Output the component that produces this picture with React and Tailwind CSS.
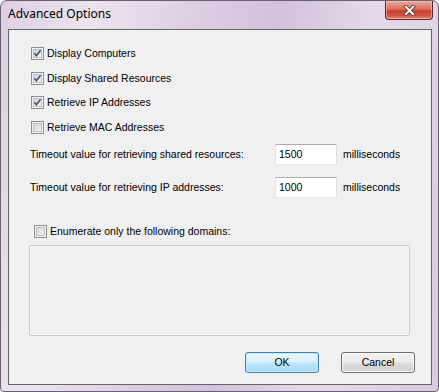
import React from "react";

function Check({ checked }) {
  return (
    <span className="flex h-[13px] w-[13px] shrink-0 border border-[#8e8f8f] bg-[#f4f4f4] p-[1px]">
      <span className="relative flex-1 border border-[#bfbfbf] bg-[linear-gradient(135deg,#d3d3d3,#f6f6f6)]">
        {checked && (
          <svg viewBox="0 0 9 9" className="absolute left-[-1px] top-[-1px] h-[9px] w-[9px]">
            <path d="M1.5 4.2 L3.4 6.6 L7.6 1.2" fill="none" stroke="#3e5393" strokeWidth="1.6" />
          </svg>
        )}
      </span>
    </span>
  );
}

function CheckRow({ checked, label, className }) {
  return (
    <div className={"flex h-[13px] items-center " + className}>
      <Check checked={checked} />
      <span className="ml-[3px] whitespace-nowrap leading-[13px]">{label}</span>
    </div>
  );
}

function Timeout({ label, value, className }) {
  return (
    <div className={"flex h-[21px] items-center " + className}>
      <span className="w-[245px] whitespace-nowrap">{label}</span>
      <div className="flex h-[21px] w-[62px] items-center border border-[#abadb3] border-b-[#e3e9ef] border-l-[#e2e3ea] border-r-[#dbdfe6] bg-white pl-[3px] text-black">
        {value}
      </div>
      <span className="ml-[6px]">milliseconds</span>
    </div>
  );
}

export default function App() {
  return (
    <div className="h-[392px] w-[439px] bg-white">
      <div className="flex h-[392px] w-[439px] flex-col rounded-t-[7px] rounded-b-[4px] border border-[#6a5f72] bg-[linear-gradient(100deg,#dccfe2_0%,#ece4ef_18%,#ddcde3_40%,#d3c1db_55%,#e5dae9_75%,#dacbe0_100%)]">
        <div className="flex h-[28px] shrink-0 items-start">
          <span className="ml-[7px] mt-[5px] font-['Noto_Sans',sans-serif] text-[12px] leading-[16px] text-black">
            Advanced Options
          </span>
          <div className="ml-auto mr-[5px] flex h-[19px] w-[48px] items-center justify-center rounded-b-[4px] border border-t-0 border-[#5c2a24] bg-[linear-gradient(180deg,#e9aa9e_0%,#d9715f_45%,#c7402c_55%,#d0523e_80%,#e3907f_100%)] shadow-[inset_0_0_0_1px_rgba(255,210,200,0.5)]">
            <svg viewBox="0 0 14 12" className="h-[11px] w-[13px]">
              <path d="M3 2 L11 10 M11 2 L3 10" stroke="#5a3a36" strokeWidth="4" strokeLinecap="square" />
              <path d="M3 2 L11 10 M11 2 L3 10" stroke="#ffffff" strokeWidth="2.2" strokeLinecap="square" />
            </svg>
          </div>
        </div>
        <div className="ml-[7px] flex h-[356px] w-[424px] flex-col border border-[#646464] bg-[#f0f0f0] font-['Liberation_Sans',Arial,sans-serif] text-[10.5px] text-black">
          <CheckRow checked label="Display Computers" className="ml-[22px] mt-[17px]" />
          <CheckRow checked label="Display Shared Resources" className="ml-[22px] mt-[12px]" />
          <CheckRow checked label="Retrieve IP Addresses" className="ml-[22px] mt-[11px]" />
          <CheckRow label="Retrieve MAC Addresses" className="ml-[22px] mt-[12px]" />
          <Timeout label="Timeout value for retrieving shared resources:" value="1500" className="ml-[21px] mt-[10px]" />
          <Timeout label="Timeout value for retrieving IP addresses:" value="1000" className="ml-[21px] mt-[12px]" />
          <CheckRow label="Enumerate only the following domains:" className="ml-[25px] mt-[27px]" />
          <div className="ml-[20px] mt-[7px] h-[91px] w-[381px] rounded-[2px] border border-[#c8c8c8] shadow-[inset_0_0_0_1px_#f8f8f8]" />
          <div className="mt-[16px] flex">
            <button className="ml-[236px] flex h-[21px] w-[74px] items-center justify-center rounded-[3px] border border-[#3c7fb1] bg-[linear-gradient(180deg,#eaf6fd_0%,#d9f0fc_48%,#bee6fd_52%,#a7d9f5_100%)] shadow-[inset_0_0_0_1px_#c8eafb] text-black">
              OK
            </button>
            <button className="ml-[22px] flex h-[21px] w-[74px] items-center justify-center rounded-[3px] border border-[#707070] bg-[linear-gradient(180deg,#f2f2f2_0%,#ebebeb_48%,#dddddd_52%,#cfcfcf_100%)] shadow-[inset_0_0_0_1px_#fcfcfc] text-black">
              Cancel
            </button>
          </div>
        </div>
      </div>
    </div>
  );
}
